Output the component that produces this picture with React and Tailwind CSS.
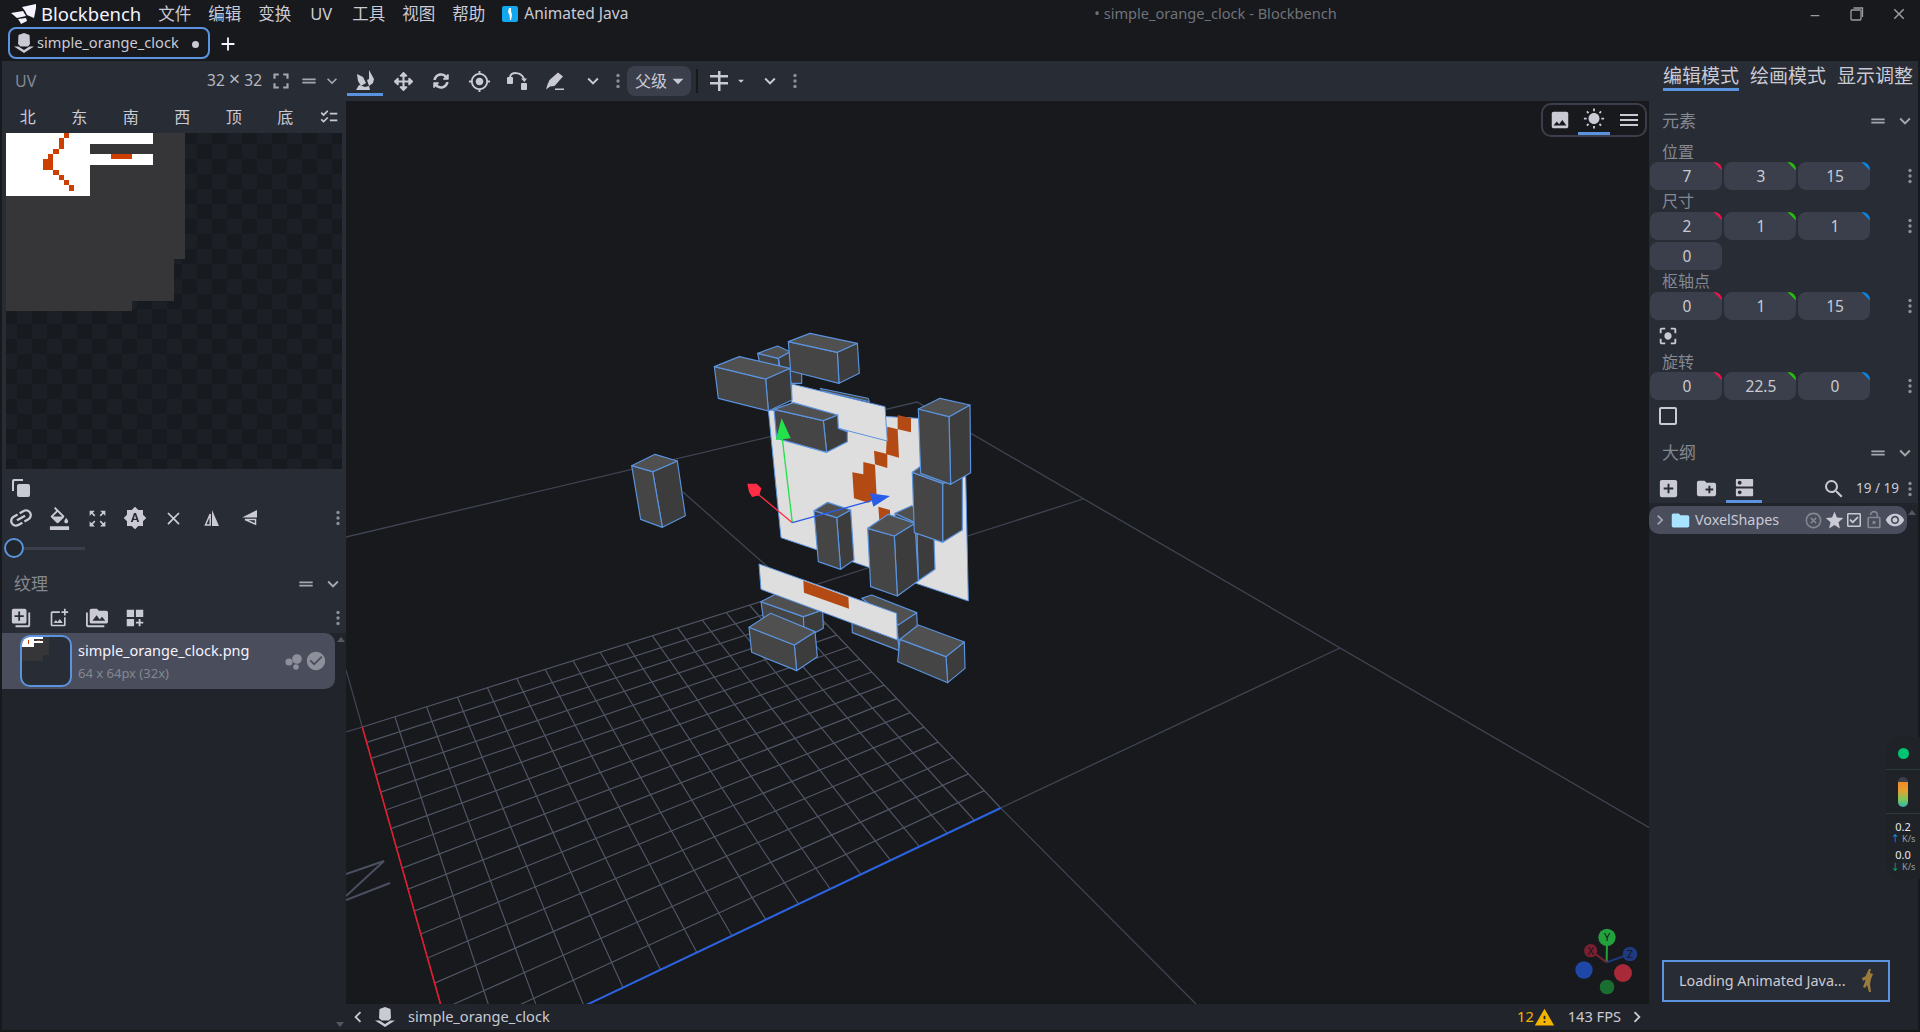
import {
  MdFormatColorFill, MdZoomOutMap, MdBrightnessAuto, MdClose, MdAddToPhotos, MdPermMedia, MdLink,
  MdDashboardCustomize, MdChecklist, MdFullscreen, MdDragHandle, MdExpandMore, MdGpsFixed, MdImage, MdWbSunny,
  MdMenu, MdCenterFocusStrong, MdCheckBoxOutlineBlank, MdAddBox, MdCreateNewFolder, MdDns, MdSearch, MdChevronRight,
  MdChevronLeft, MdFolder, MdHighlightOff, MdStar, MdLockOpen, MdVisibility, MdWarning, MdCheckCircle, MdArrowDropDown,
  MdMinimize, MdOutlineAddPhotoAlternate, MdAdd,
} from 'react-icons/md'
import { FaArrowsAlt, FaSyncAlt, FaRegCheckSquare } from 'react-icons/fa'

const ICON = 'text-[#cacad4]'

function Dots() {
  return (
    <svg width="4" height="16" viewBox="0 0 4 16" className="shrink-0">
      <circle cx="2" cy="2.5" r="1.7" fill="#8b8e97" />
      <circle cx="2" cy="8" r="1.7" fill="#8b8e97" />
      <circle cx="2" cy="13.5" r="1.7" fill="#8b8e97" />
    </svg>
  )
}

function JavaBlock({ size = 20 }) {
  return (
    <svg width={size} height={size} viewBox="0 0 20 20" fill="#cacad4">
      <path d="M4.500 2 10 0l5.500 2 .5 9-2 2.500H6.500L4 11z" />
      <path d="M0 13.500h4.500L10 17l5.500-3.500H20L10 20z" />
    </svg>
  )
}

function PanelHead({ title, className = '' }) {
  return (
    <div className={`flex items-center ${className}`}>
      <span className="text-[17px] text-[#848891]">{title}</span>
      <MdDragHandle size={20} className="ml-auto text-[#a5a7ae]" />
      <MdExpandMore size={22} className="ml-[6px] mr-[2px] text-[#a5a7ae]" />
    </div>
  )
}

function Slot({ children, className = 'w-[38px]' }) {
  return <div className={`flex items-center justify-center shrink-0 ${className}`}>{children}</div>
}

function Num({ value, axis }) {
  const c = axis === 'x' ? 'bg-[#e6174a]' : axis === 'y' ? 'bg-[#26c20a]' : axis === 'z' ? 'bg-[#0b86e6]' : ''
  return (
    <div className="relative overflow-hidden w-[72px] h-[28px] rounded-[8px] bg-[#3a3f4b] flex items-center justify-center pt-px pl-[2px] text-[15.5px] text-[#cacad4]">
      {value}
      {axis && <span className={`absolute -top-[6px] -right-[6px] w-[12px] h-[12px] rotate-45 ${c}`} />}
    </div>
  )
}

function NumRow({ values }) {
  return (
    <div className="flex items-center gap-[2px] pl-px h-[28px]">
      <Num value={values[0]} axis="x" />
      <Num value={values[1]} axis="y" />
      <Num value={values[2]} axis="z" />
      <div className="ml-auto w-[16px] flex justify-center"><Dots /></div>
    </div>
  )
}

function Label({ children, className }) {
  return <div className={`pl-[13px] flex items-center text-[16px] leading-none text-[#848891] ${className}`}>{children}</div>
}

function ScrollCaret({ down }) {
  return (
    <svg width="8" height="5" viewBox="0 0 8 5" className="shrink-0">
      <path d={down ? 'M0 0h8L4 5z' : 'M0 5h8L4 0z'} fill="#555862" />
    </svg>
  )
}

function UvCanvas() {
  return (
    <svg width="336" height="336" viewBox="0 0 336 336" className="ml-[4px] block" shapeRendering="crispEdges">
      <defs>
        <pattern id="checker" x="-4" y="-4" width="30" height="30" patternUnits="userSpaceOnUse">
          <rect width="30" height="30" fill="#171a1e" />
          <rect x="15" width="15" height="15" fill="#1c2026" />
          <rect y="15" width="15" height="15" fill="#1c2026" />
        </pattern>
      </defs>
      <rect width="336" height="336" fill="url(#checker)" />
      <path d="M0 0h179v126h-11v42h-42v10H0z" fill="#363638" />
      <path d="M0 0h147v11H84v10h63v11H84v31H0z" fill="#fff" />
      {[
        [58, 0, 5, 5], [53, 5, 5, 11], [47, 16, 6, 5], [42, 21, 5, 5], [37, 26, 10, 11], [47, 37, 6, 5],
        [53, 42, 5, 5], [58, 47, 5, 5], [63, 52, 5, 6], [105, 21, 21, 5],
      ].map(([x, y, w, h]) => (
        <rect key={`${x}-${y}`} x={x} y={y} width={w} height={h} fill="#cc3f00" />
      ))}
    </svg>
  )
}

function LeftColumn() {
  return (
    <div className="w-[344px] shrink-0 flex flex-col bg-[#21252b]">
      <div className="bg-[#282c34]">
        <div className="h-10 flex items-center pl-[13px] pr-[4px]">
          <span className="text-[16px] text-[#848891]">UV</span>
          <span className="ml-auto text-[15.5px] text-[#b5b6bf]">32 <span className="text-[20px] leading-none">×</span> 32</span>
          <MdFullscreen size={26} className="ml-[6px] text-[#a5a7ae]" />
          <MdDragHandle size={20} className="ml-[5px] text-[#a5a7ae]" />
          <MdExpandMore size={20} className="ml-[3px] text-[#a5a7ae]" />
        </div>
        <div className="h-[32px] flex items-center text-[16px] text-[#cacad4]">
          {['北', '东', '南', '西', '顶', '底'].map((f) => (
            <div key={f} className="w-[51.5px] text-center">{f}</div>
          ))}
          <MdChecklist size={20} className="ml-[8px] text-[#cacad4]" />
        </div>
        <UvCanvas />
        <div className="h-[37px] flex items-center">
          <Slot>
            <svg width="20" height="20" viewBox="0 0 20 20" fill="#cacad4">
              <path d="M3 1h9v2H4a1 1 0 0 0-1 1v9H1V3a2 2 0 0 1 2-2z" />
              <rect x="6" y="6" width="13" height="13" rx="2" />
            </svg>
          </Slot>
        </div>
        <div className="h-[24px] flex items-center">
          <Slot><MdLink size={28} className={`${ICON} -rotate-[30deg]`} /></Slot>
          <Slot><MdFormatColorFill size={23} className={ICON} /></Slot>
          <Slot><MdZoomOutMap size={21} className={ICON} /></Slot>
          <Slot><MdBrightnessAuto size={24} className={ICON} /></Slot>
          <Slot><MdClose size={21} className={ICON} /></Slot>
          <Slot>
            <svg width="18" height="18" viewBox="0 0 18 18" fill="#cacad4">
              <path d="M10 1l7 16h-7z" />
              <path d="M8.200 5v11H3.500z" fill="none" stroke="#cacad4" strokeWidth="1.500" />
            </svg>
          </Slot>
          <Slot>
            <svg width="18" height="18" viewBox="0 0 18 18" fill="#cacad4">
              <path d="M17 1v7.500H2z" />
              <path d="M5 10.500h10.500v4.700z" fill="none" stroke="#cacad4" strokeWidth="1.500" />
            </svg>
          </Slot>
          <div className="ml-auto w-4 flex justify-center"><Dots /></div>
        </div>
        <div className="h-[36px] flex items-center pl-[2px]">
          <div className="w-[20px] h-[20px] rounded-full border-2 border-[#5b93de] bg-[#21252b] shrink-0" />
          <div className="w-[61px] h-[3px] bg-[#3a3f4b]" />
        </div>
        <PanelHead title="纹理" className="h-[36px] pl-[12px]" />
        <div className="h-[31px] flex items-center">
          <Slot><MdAddToPhotos size={22} className={`${ICON} -scale-x-100`} /></Slot>
          <Slot><MdOutlineAddPhotoAlternate size={20} className={ICON} /></Slot>
          <Slot><MdPermMedia size={22} className={ICON} /></Slot>
          <Slot><MdDashboardCustomize size={22} className={ICON} /></Slot>
          <div className="ml-auto w-4 flex justify-center"><Dots /></div>
        </div>
      </div>
      <div className="flex items-start">
        <div className="w-[333px] h-[56px] bg-[#494d5c] rounded-r-[10px] flex items-center pl-[18px]">
          <div className="relative overflow-hidden w-[52px] h-[52px] rounded-[10px] border-2 border-[#5b93de] bg-[#282c34] shrink-0">
            <svg width="48" height="48" viewBox="0 0 48 48" className="block" shapeRendering="crispEdges">
              <path d="M0 0h27v18h-6v6H0z" fill="#363638" />
              <path d="M0 0h21v2h-9v2h9v2h-9v4H0z" fill="#fff" />
              <rect x="6" y="3" width="1" height="4" fill="#cc3f00" />
              <rect x="15" y="3" width="3" height="1" fill="#cc3f00" />
            </svg>
          </div>
          <div className="ml-[6px] flex flex-col">
            <span className="text-[14.5px] leading-[20px] text-[#f4f3ff]">simple_orange_clock.png</span>
            <span className="mt-[4px] text-[13px] leading-[18px] text-[#848891]">64 x 64px (32x)</span>
          </div>
          <svg width="18" height="16" viewBox="0 0 18 16" fill="#8d909a" className="ml-auto mt-px">
            <circle cx="4" cy="8" r="3.6" /><circle cx="12" cy="5" r="4.800" /><circle cx="11" cy="13" r="2.800" />
          </svg>
          <MdCheckCircle size={22} className="ml-[2px] mr-[8px] text-[#8d909a]" />
        </div>
        <div className="ml-[2px] mt-[4px]"><ScrollCaret /></div>
      </div>
      <div className="mt-auto h-[8px] pl-[334px] pb-[6px]"><ScrollCaret down /></div>
    </div>
  )
}

function Toolbar() {
  return (
    <div className="h-10 shrink-0 bg-[#282c34] flex items-center">
      <div className="w-[38px] self-start mt-[5px] h-[30px] flex justify-center">
        <div className="w-[36px] h-[30px] pt-[2px] border-b-[3px] border-[#5b93de] flex items-center justify-center">
          <svg width="22" height="22" viewBox="0 0 22 22" fill="#cacad4">
            <path d="M15 0l5 9-1 4-4 3-2-6 2-1zM3 4l6 3 3 6-5 3-3-5zM2 20l3-5 6 2 4-1 1 4z" />
          </svg>
        </div>
      </div>
      <Slot><FaArrowsAlt size={19} className={ICON} /></Slot>
      <Slot><FaSyncAlt size={16} className={ICON} /></Slot>
      <Slot><MdGpsFixed size={23} className={ICON} /></Slot>
      <Slot>
        <svg width="22" height="20" viewBox="0 0 22 20">
          <rect x="1" y="6" width="6" height="7" rx="1" fill="#cacad4" />
          <rect x="15" y="12" width="6" height="7" rx="1" fill="#cacad4" />
          <path d="M4 6c1-5 11-6 14 2" fill="none" stroke="#cacad4" strokeWidth="2" />
          <path d="M15 7.500h6l-2.500 3.500z" fill="#cacad4" />
        </svg>
      </Slot>
      <Slot>
        <svg width="20" height="20" viewBox="0 0 20 20" fill="#cacad4">
          <path d="M13 1.500 18 5.500 9.500 15 5 15.500 1 18.500 2.500 13.500 4.500 9z" />
          <rect x="10" y="17.500" width="9" height="1.500" />
        </svg>
      </Slot>
      <Slot><MdExpandMore size={22} className={ICON} /></Slot>
      <Slot className="w-3"><Dots /></Slot>
      <div className="ml-[3px] w-[64px] h-[30px] rounded-[8px] bg-[#3a3f4b] flex items-center pl-[8px] text-[16px] text-[#cacad4]">
        父级
        <MdArrowDropDown size={26} className="-ml-[2px]" />
      </div>
      <div className="ml-[5px] w-[2px] h-6 bg-[#17191d]" />
      <Slot className="ml-[6px] w-[30px]">
        <svg width="18" height="20" viewBox="0 0 18 20" fill="#cacad4">
          <rect x="8" width="2.500" height="20" /><rect y="4" width="18" height="2.500" /><rect y="11" width="18" height="2.500" />
        </svg>
      </Slot>
      <Slot className="w-[14px]"><MdArrowDropDown size={24} className={ICON} /></Slot>
      <Slot className="ml-[3px] w-[38px]"><MdExpandMore size={22} className={ICON} /></Slot>
      <Slot className="w-3"><Dots /></Slot>
    </div>
  )
}

// floor grid: perspective of a 16x16 square from its four corners
function floorProjection(p0, p1, p2, p3) {
  const dx1 = p1[0] - p2[0], dx2 = p3[0] - p2[0], sx = p0[0] - p1[0] + p2[0] - p3[0]
  const dy1 = p1[1] - p2[1], dy2 = p3[1] - p2[1], sy = p0[1] - p1[1] + p2[1] - p3[1]
  const den = dx1 * dy2 - dx2 * dy1
  const g = (sx * dy2 - dx2 * sy) / den, h = (dx1 * sy - sx * dy1) / den
  const a = p1[0] - p0[0] + g * p1[0], b = p3[0] - p0[0] + h * p3[0]
  const d = p1[1] - p0[1] + g * p1[1], e = p3[1] - p0[1] + h * p3[1]
  return (u, v) => {
    const w = g * u + h * v + 1
    return [(a * u + b * v + p0[0]) / w, (d * u + e * v + p0[1]) / w]
  }
}

const FLOOR = [[362.3, 727], [795, 591], [1000.7, 808], [458, 1066]]

function FloorGrid() {
  const at = floorProjection(...FLOOR)
  const lines = []
  for (let i = 0; i <= 16; i++) {
    lines.push([at(i / 16, 0), at(i / 16, 1)])
    lines.push([at(0, i / 16), at(1, i / 16)])
  }
  return (
    <g stroke="#505564" strokeWidth="1.200">
      {lines.map(([s, t], i) => (
        <line key={i} x1={s[0]} y1={s[1]} x2={t[0]} y2={t[1]} />
      ))}
      <line x1={FLOOR[0][0]} y1={FLOOR[0][1]} x2={FLOOR[3][0]} y2={FLOOR[3][1]} stroke="#e8192c" strokeWidth="1.500" />
      <line x1={FLOOR[2][0]} y1={FLOOR[2][1]} x2={FLOOR[3][0]} y2={FLOOR[3][1]} stroke="#2a62e0" strokeWidth="2" />
    </g>
  )
}

function Cube({ top, left, right }) {
  return (
    <g stroke="#5b93de" strokeWidth="3.500" strokeLinejoin="round">
      <polygon points={right} fill="#3c3c3d" />
      <polygon points={left} fill="#454546" />
      <polygon points={top} fill="#505051" />
    </g>
  )
}

function Plate({ points }) {
  return <polygon points={points} fill="#dedede" stroke="#5b93de" strokeWidth="3" strokeLinejoin="round" />
}

function Scene() {
  return (
    <svg viewBox="346 101 1303 903" className="absolute inset-0 w-full h-full">
      <g stroke="#3f4451" strokeWidth="1.300" fill="none">
        <path d="M346 537 917 402 1650 828" />
        <path d="M762 602 1083 499" />
        <path d="M1000.700 808 1340 648" />
        <path d="M1000.700 808 1196 1004" />
        <path d="M683 492 795 591" />
        <path d="M346 670 362.300 727 346 732" />
      </g>
      <g stroke="#4b5060" strokeWidth="2" fill="none">
        <path d="M346 874 384 861 346 896" />
        <path d="M346 900 390 883" />
      </g>
      <FloorGrid />
      <g transform="translate(600 310) scale(0.33333)">
        <polygon points="660,235 805,265 808,275 665,242" fill="#4a4a4c" stroke="#5b93de" strokeWidth="3" />
        <Plate points="505,300 955,325 1097,490 1105,873 543,683" />
        {['893,315 933,325 933,367 893,358', '862,350 893,358 897,443 858,432', '822,422 862,432 862,474 825,463',
          '757,487 790,493 790,456 825,464 830,560 805,578 762,565', '835,590 870,600 870,628 838,632'].map((p) => (
          <polygon key={p} points={p} fill="#b34a14" />
        ))}
        <Cube top="473,130 533,108 570,125 535,145" left="473,130 535,145 537,170 478,155" right="535,145 570,125 575,180 605,190 605,220 575,220 540,170" />
        <Cube top="565,95 630,70 772,100 712,127" left="565,95 712,127 717,220 572,183" right="712,127 772,100 778,190 717,220" />
        <Plate points="575,222 855,290 862,393 715,355 575,290" />
        <Cube top="343,170 418,140 570,175 497,207" left="343,170 497,207 505,303 355,265" right="497,207 570,175 576,270 505,303" />
        <Cube top="522,298 580,278 713,315 670,332" left="522,298 670,332 680,427 530,385" right="670,332 713,315 715,355 742,365 742,395 680,427" />
        <Cube top="95,467 165,433 232,453 158,485" left="95,467 158,485 187,652 122,628" right="158,485 232,453 256,617 187,652" />
        <Cube top="642,602 683,577 752,600 710,623" left="642,602 710,623 722,778 655,755" right="710,623 752,600 762,750 722,778" />
        <Cube top="885,610 935,587 1000,620 950,640" left="885,610 950,640 955,812 890,780" right="950,640 1000,620 1005,778 955,812" />
        <Cube top="803,655 865,613 945,640 883,678" left="803,655 883,678 892,858 812,830" right="883,678 945,640 955,812 892,858" />
        <Cube top="937,487 960,470 1097,497 1028,520" left="937,487 1028,520 1028,697 943,668" right="1028,520 1087,500 1087,660 1028,697" />
        <Cube top="955,297 1020,265 1110,285 1047,320" left="955,297 1047,320 1052,523 962,490" right="1047,320 1110,285 1112,488 1052,523" />
        <Cube top="483,875 528,852 668,900 610,920" left="483,875 610,920 612,960 490,925" right="610,920 668,900 670,955 645,968 610,950" />
        <Cube top="785,865 815,855 950,908 895,945" left="755,900 890,960 898,1022 757,968" right="890,945 950,908 952,950 898,1022" />
        <Plate points="477,762 890,910 892,990 483,838" />
        <polygon points="610,812 745,862 747,896 612,848" fill="#b34a14" />
        <Cube top="447,952 512,910 645,965 583,1005" left="447,952 583,1005 590,1082 455,1027" right="583,1005 645,965 652,1040 590,1082" />
        <Cube top="900,988 955,945 1093,996 1038,1040" left="900,988 1038,1040 1043,1118 893,1055" right="1038,1040 1093,996 1095,1075 1043,1118" />
        <line x1="577" y1="638" x2="545" y2="370" stroke="#22e34a" strokeWidth="4" />
        <polygon points="545,325 572,385 527,390" fill="#22e34a" />
        <line x1="577" y1="638" x2="465" y2="545" stroke="#ff2e45" strokeWidth="4" />
        <path d="M442 521 470 521 484 535 478 556 456 561 447 545z" fill="#ff2e45" />
        <line x1="577" y1="638" x2="815" y2="572" stroke="#2a5ce8" strokeWidth="4" />
        <polygon points="810,550 870,558 820,590" fill="#2a5ce8" />
      </g>
      <g transform="translate(1500 720) scale(0.33333)">
        <line x1="320" y1="727" x2="321" y2="652" stroke="#22a13c" strokeWidth="6" />
        <line x1="320" y1="727" x2="272" y2="692" stroke="#7a2030" strokeWidth="6" />
        <line x1="320" y1="727" x2="390" y2="702" stroke="#1e3a80" strokeWidth="6" />
        <circle cx="321" cy="652" r="26" fill="#22a13c" />
        <circle cx="272" cy="692" r="20" fill="#7a2030" />
        <circle cx="390" cy="702" r="22" fill="#1e3a80" />
        <circle cx="252" cy="750" r="26" fill="#1f47a8" />
        <circle cx="369" cy="759" r="27" fill="#a82a38" />
        <circle cx="321" cy="801" r="22" fill="#1a6e30" />
        <g fontSize="33" fill="#17191d" textAnchor="middle" fontFamily="Noto Sans, sans-serif">
          <text x="321" y="664">Y</text>
          <text x="272" y="704">X</text>
          <text x="390" y="714">Z</text>
        </g>
      </g>
    </svg>
  )
}

function CenterColumn() {
  return (
    <div className="flex-1 min-w-0 flex flex-col">
      <Toolbar />
      <div className="relative flex-1 overflow-hidden bg-[#17191d]">
        <Scene />
        <div className="absolute top-[2px] right-[2px] w-[106px] h-[34px] rounded-[10px] border-2 border-[#3a3f4b] bg-[#17191d] flex items-center justify-between pl-[6px] pr-[4px]">
          <MdImage size={22} className={ICON} />
          <div className="h-[30px] w-[32px] border-b-[3px] border-[#5b93de] flex items-center justify-center">
            <MdWbSunny size={22} className={ICON} />
          </div>
          <MdMenu size={24} className={ICON} />
        </div>
      </div>
      <div className="h-[26px] shrink-0 bg-[#21252b] flex items-center text-[14.6px] text-[#cacad4]">
        <MdChevronLeft size={22} className="ml-[1px]" />
        <div className="ml-[6px]"><JavaBlock size={20} /></div>
        <span className="ml-[13px]">simple_orange_clock</span>
        <span className="ml-auto text-[#f5b400]">12</span>
        <MdWarning size={21} className="text-[#f5b400]" />
        <span className="ml-[13px]">143 FPS</span>
        <MdChevronRight size={22} className="ml-[5px] mr-[1px]" />
      </div>
    </div>
  )
}

function RightColumn() {
  return (
    <div className="w-[269px] shrink-0 flex flex-col bg-[#21252b]">
      <div className="h-10 bg-[#282c34] flex items-start pl-[14px] gap-[11px] text-[19px] leading-none text-[#cacad4]">
        <div className="h-[30px] pt-[3px] flex items-center border-b-[3px] border-[#5b93de]">编辑模式</div>
        <div className="h-[30px] pt-[3px] flex items-center border-b-[3px] border-transparent">绘画模式</div>
        <div className="h-[30px] pt-[3px] flex items-center border-b-[3px] border-transparent">显示调整</div>
      </div>
      <div className="bg-[#282c34]">
        <PanelHead title="元素" className="h-10 pl-[13px]" />
        <Label className="h-[21px]">位置</Label>
        <NumRow values={[7, 3, 15]} />
        <Label className="h-[22px]">尺寸</Label>
        <NumRow values={[2, 1, 1]} />
        <div className="pl-px mt-[2px]"><Num value={0} /></div>
        <Label className="h-[22px]">枢轴点</Label>
        <NumRow values={[0, 1, 15]} />
        <div className="h-[32px] flex items-center pl-[8px]"><MdCenterFocusStrong size={22} className={ICON} /></div>
        <Label className="h-[20px]">旋转</Label>
        <NumRow values={[0, 22.5, 0]} />
        <div className="h-[32px] flex items-center pl-[7px]"><MdCheckBoxOutlineBlank size={24} className={ICON} /></div>
        <PanelHead title="大纲" className="h-[42px] pl-[13px]" />
        <div className="h-[29px] flex items-start">
          <Slot className="w-[38px] h-[29px]"><MdAddBox size={23} className={ICON} /></Slot>
          <Slot className="w-[38px] h-[29px]"><MdCreateNewFolder size={23} className={ICON} /></Slot>
          <div className="w-[38px] h-[29px] flex justify-center">
            <div className="w-[36px] h-[29px] border-b-[3px] border-[#5b93de] flex items-center justify-center">
              <MdDns size={23} className={ICON} />
            </div>
          </div>
          <div className="ml-auto h-[29px] flex items-center text-[13.500px] text-[#cacad4]">
            <MdSearch size={24} className="mr-[10px]" />
            19 / 19
            <div className="ml-[3px] w-[16px] flex justify-center"><Dots /></div>
          </div>
        </div>
      </div>
      <div className="mt-[3px] flex items-start">
        <div className="w-[258px] h-[28px] rounded-[10px] bg-[#494d5c] flex items-center text-[14.3px] text-[#cacad4]">
          <MdChevronRight size={20} className="ml-[1px] text-[#a5a7ae]" />
          <MdFolder size={21} className="text-[#a8e4ff]" />
          <span className="ml-[4px]">VoxelShapes</span>
          <MdHighlightOff size={19} className="ml-auto text-[#848891]" />
          <MdStar size={21} className="ml-px" />
          <FaRegCheckSquare size={16} className="ml-[1px]" />
          <MdLockOpen size={20} className="ml-[2px] text-[#848891]" />
          <MdVisibility size={20} className="ml-px mr-[2px]" />
        </div>
        <div className="ml-[1px] mt-[4px]"><ScrollCaret /></div>
      </div>
      <div className="mt-auto ml-[13px] mb-[28px] w-[228px] h-[42px] border-2 border-[#5b93de] bg-[#282c34] flex items-center pl-[15px] text-[14.4px] text-[#cacad4]">
        Loading Animated Java...
        <svg width="12" height="24" viewBox="0 0 12 24" className="ml-auto mr-[15px]" fill="#9a7b3c">
          <path d="M8 0h2l-1 4 3 1-2 5-1 5 1 8H8l-2-7-2 3-2-1 2-5 1-7zM1 9l4-2v3l-3 2z" />
        </svg>
      </div>
    </div>
  )
}

function TitleBar() {
  return (
    <div className="h-7 shrink-0 flex items-center text-[16.5px] text-[#cacad4]">
      <svg width="26" height="20" viewBox="0 0 26 20" fill="#f4f3ff" className="ml-[11px]">
        <path d="M11 3 25 0v4l-2 10-7-3-2-4zM0 9l12-2 3 5-9 2zM7 15l8-1 1 3-6 3-1-2z" />
      </svg>
      <span className="ml-[4px] text-[18.500px] text-[#f4f3ff]">Blockbench</span>
      <div className="ml-[17px] flex items-center">
        <span className="mr-[17px]">文件</span>
        <span className="mr-[17px]">编辑</span>
        <span className="mr-[19px]">变换</span>
        <span className="mr-[20px]">UV</span>
        <span className="mr-[17px]">工具</span>
        <span className="mr-[17px]">视图</span>
        <span className="mr-[17px]">帮助</span>
      </div>
      <svg width="16" height="16" viewBox="0 0 16 16">
        <rect width="16" height="16" rx="2" fill="#12a7ef" />
        <path d="M7 2h2v3l1 4-1 5H8L7.500 9 6 6z" fill="#fff" />
      </svg>
      <span className="ml-[6px] text-[15.500px]">Animated Java</span>
      <span className="ml-[466px] text-[14.600px] text-[#6f7279]">• simple_orange_clock - Blockbench</span>
      <div className="ml-auto flex items-center">
        <Slot className="w-[42px]"><MdMinimize size={14} className="text-[#9a9ca3] -translate-y-[3px] scale-x-125" /></Slot>
        <Slot className="w-[42px]">
          <svg width="14" height="14" viewBox="0 0 14 14" fill="none" stroke="#9a9ca3" strokeWidth="1.300">
            <rect x="1" y="3" width="10" height="10" rx="1" /><path d="M3.500 1h9v9" />
          </svg>
        </Slot>
        <Slot className="w-[42px]"><MdClose size={18} className="text-[#9a9ca3]" /></Slot>
      </div>
    </div>
  )
}

function TabBar() {
  return (
    <div className="h-[33px] shrink-0 flex items-start pl-2 text-[14.6px] text-[#cacad4]">
      <div className="w-[202px] h-[32px] -mt-px rounded-[8px] border-2 border-[#5b93de] flex items-center pl-[4px]">
        <JavaBlock size={20} />
        <span className="ml-[3px]">simple_orange_clock</span>
        <span className="ml-auto mr-[9px] w-[7px] h-[7px] mt-[3px] rounded-full bg-[#cacad4]" />
      </div>
      <MdAdd size={22} className="ml-[7px] mt-[5px] text-[#f4f3ff]" />
    </div>
  )
}

function NetMonitor() {
  return (
    <div className="absolute right-0 top-[737px] w-[34px] h-[142px] rounded-l-[12px] bg-[#1f2328] flex flex-col items-center text-[#e8e8ee]">
      <div className="h-[33px] w-full flex items-center justify-center border-b border-[#2c3a3f]">
        <span className="w-[11px] h-[11px] rounded-full bg-[#00c46f]" />
      </div>
      <div className="h-[44px] w-full flex items-center justify-center border-b border-[#2c3a3f]">
        <div className="w-[10px] h-[30px] rounded-full bg-[linear-gradient(to_bottom,#3a3f4b_0%,#3a3f4b_16%,#f08c28_17%,#e6a030_45%,#7fc65a_75%,#2cb6b0_100%)]" />
      </div>
      <span className="mt-[6px] text-[11px] leading-[13px]">0.2</span>
      <span className="text-[9px] leading-[11px] text-[#9a9ca3] whitespace-nowrap"><span className="text-[#12a7ef]">↑</span> K/s</span>
      <span className="mt-[4px] text-[11px] leading-[13px]">0.0</span>
      <span className="text-[9px] leading-[11px] text-[#9a9ca3] whitespace-nowrap"><span className="text-[#00c46f]">↓</span> K/s</span>
    </div>
  )
}

export default function App() {
  return (
    <div className="relative w-[1920px] h-[1032px] overflow-hidden flex flex-col bg-[#17191d] [font-family:'Noto_Sans','Noto_Sans_CJK_SC',sans-serif]">
      <TitleBar />
      <TabBar />
      <div className="h-[969px] flex px-[2px]">
        <LeftColumn />
        <CenterColumn />
        <RightColumn />
      </div>
      <NetMonitor />
    </div>
  )
}
